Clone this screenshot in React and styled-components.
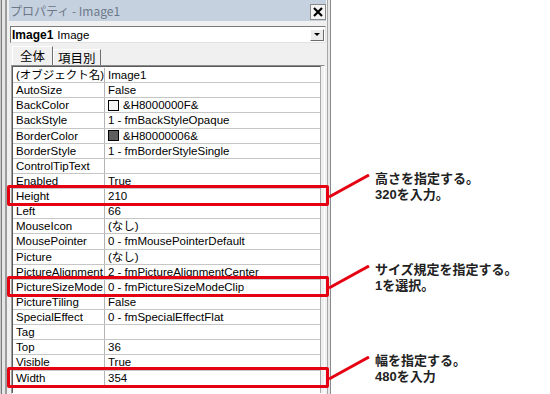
import React from 'react'
import styled, { createGlobalStyle } from 'styled-components'

const GlobalStyle = createGlobalStyle`
  body {
    margin: 0;
    background: #fff;
    font-family: "Liberation Sans", "Noto Sans CJK JP", sans-serif;
  }
`

const Page = styled.div`
  display: flex;
  width: 550px;
  height: 394px;
  overflow: hidden;
  background: #fff;
`
const Window = styled.section`
  display: flex;
  flex-direction: column;
  box-sizing: border-box;
  width: 331px;
  height: 394px;
  padding: 0 5px 0 9px;
  background: #f0f0f0;
  box-shadow: inset 1px 0 #c8c8c8, inset 2px 0 #7a7a7a, inset 5px 0 #e6e6e6,
    inset 7px 0 #9c9c9c, inset -1px 0 #8a8a8a, inset -3px 0 #e8e8e8,
    inset -4px 0 #a8a8a8;
`
const TitleBar = styled.header`
  display: flex;
  align-items: center;
  justify-content: space-between;
  height: 21px;
  padding-left: 1px;
  background: #c5d1df;
  color: #6d7888;
  font-family: "Noto Sans CJK JP", sans-serif;
  font-size: 12px;
`
const CloseButton = styled.div`
  display: flex;
  align-items: center;
  justify-content: center;
  box-sizing: border-box;
  width: 16px;
  height: 16px;
  margin-top: 2px;
  border: 1px solid #8a8a8a;
  background: #f4f4f4;
`
const Body = styled.div`
  display: flex;
  flex-direction: column;
  flex: 1;
  min-height: 0;
  padding: 5px 0 0 1px;
`
const ObjectSelect = styled.div`
  display: flex;
  align-items: center;
  box-sizing: border-box;
  height: 17px;
  padding-left: 1px;
  border: 1px solid;
  border-color: #7a7a7a #e2e2e2 #e2e2e2 #7a7a7a;
  background: #fff;
  font-size: 11.5px;
  color: #000;
  b {
    font-size: 12px;
    margin-right: 4px;
  }
`
const DropButton = styled.div`
  display: flex;
  align-items: center;
  justify-content: center;
  box-sizing: border-box;
  width: 14px;
  height: 12px;
  margin: 0 1px 0 auto;
  border: 1px solid;
  border-color: #fff #6a6a6a #6a6a6a #fff;
  background: #ececec;
  &::after {
    content: '';
    margin-top: 3px;
    border: 3px solid transparent;
    border-top: 3px solid #000;
  }
`
const TabStrip = styled.div`
  display: flex;
  align-items: flex-end;
  height: 19px;
  margin-top: 3px;
  padding-left: 2px;
`
const Tab = styled.div`
  box-sizing: border-box;
  height: ${p => (p.$active ? 19 : 16)}px;
  padding: 0 ${p => (p.$active ? 7 : 4)}px;
  border: 1px solid;
  border-bottom: none;
  border-color: #fff #6e6e6e transparent #fff;
  font-family: "Noto Sans CJK JP", sans-serif;
  font-size: 12.5px;
  line-height: ${p => (p.$active ? 17 : 15)}px;
  color: #000;
`
const Grid = styled.div`
  display: flex;
  flex-direction: column;
  flex: 1;
  margin: 0 1px 0 1px;
  padding-right: 3px;
  border: 1px solid;
  border-color: #8c8c8c #fff #fff #a0a0a0;
  background: #f0f0f0;
`
const Table = styled.div`
  flex: 1;
  padding-top: 1px;
  border-top: 1px solid #5a5a5a;
  border-left: 1px solid #5a5a5a;
  border-right: 1px solid #a8a8a8;
  background: #fff;
`
const Row = styled.div`
  position: relative;
  display: flex;
  box-sizing: border-box;
  height: 15.13px;
  border-bottom: 1px solid #c6c6c6;
  font-size: 11.5px;
  line-height: 14px;
  color: #000;
  ${p => p.$marked && `
    &::after {
      content: '';
      position: absolute;
      z-index: 2;
      left: -6px;
      right: -9px;
      top: -4px;
      bottom: -3px;
      border: 3px solid #e50012;
      border-radius: 2px;
      pointer-events: none;
    }
  `}
`
const NameCell = styled.div`
  box-sizing: border-box;
  width: 92px;
  padding-left: 3px;
  border-right: 1px solid #b4b4b4;
  overflow: hidden;
  white-space: nowrap;
`
const ValueCell = styled.div`
  display: flex;
  align-items: center;
  gap: 4px;
  flex: 1;
  padding-left: 3px;
  white-space: nowrap;
  overflow: hidden;
`
const Swatch = styled.span`
  box-sizing: border-box;
  width: 11px;
  height: 11px;
  border: 1px solid #000;
  background: ${p => p.$color};
`
const Callout = styled.div`
  position: absolute;
  z-index: 3;
  left: calc(100% + 8px);
  top: -18px;
  display: flex;
  align-items: flex-start;
  pointer-events: none;
`
const Note = styled.div`
  margin-left: 5px;
  font-family: "Liberation Sans", "Noto Sans CJK JP", sans-serif;
  font-size: 13px;
  font-weight: 700;
  color: #222;
  white-space: nowrap;
`
const NoteLine = styled.div`
  height: 16px;
  line-height: 16px;
`

const rows = [
  { name: '(オブジェクト名)', value: 'Image1' },
  { name: 'AutoSize', value: 'False' },
  { name: 'BackColor', value: '&H8000000F&', swatch: '#f4f4f4' },
  { name: 'BackStyle', value: '1 - fmBackStyleOpaque' },
  { name: 'BorderColor', value: '&H80000006&', swatch: '#5e5e5e' },
  { name: 'BorderStyle', value: '1 - fmBorderStyleSingle' },
  { name: 'ControlTipText', value: '' },
  { name: 'Enabled', value: 'True' },
  { name: 'Height', value: '210', note: ['高さを指定する。', '320を入力。'] },
  { name: 'Left', value: '66' },
  { name: 'MouseIcon', value: '(なし)' },
  { name: 'MousePointer', value: '0 - fmMousePointerDefault' },
  { name: 'Picture', value: '(なし)' },
  { name: 'PictureAlignment', value: '2 - fmPictureAlignmentCenter' },
  { name: 'PictureSizeMode', value: '0 - fmPictureSizeModeClip', note: ['サイズ規定を指定する。', '1を選択。'] },
  { name: 'PictureTiling', value: 'False' },
  { name: 'SpecialEffect', value: '0 - fmSpecialEffectFlat' },
  { name: 'Tag', value: '' },
  { name: 'Top', value: '36' },
  { name: 'Visible', value: 'True' },
  { name: 'Width', value: '354', note: ['幅を指定する。', '480を入力'] },
]

const Leader = () =>
  <svg width="42" height="25" style={{ marginTop: 3 }}>
    <line x1="1" y1="23" x2="41" y2="1" stroke="#e50012" strokeWidth="3" />
  </svg>

const App = () =>
  <Page>
    <GlobalStyle />
    <Window>
      <TitleBar>
        <span>プロパティ - Image1</span>
        <CloseButton>
          <svg width="10" height="10" viewBox="0 0 10 10">
            <path d="M1 1 L9 9 M9 1 L1 9" stroke="#000" strokeWidth="2.2" />
          </svg>
        </CloseButton>
      </TitleBar>
      <Body>
        <ObjectSelect>
          <b>Image1</b>Image
          <DropButton />
        </ObjectSelect>
        <TabStrip>
          <Tab $active>全体</Tab>
          <Tab>項目別</Tab>
        </TabStrip>
        <Grid>
          <Table>
            {rows.map(r =>
              <Row key={r.name} $marked={!!r.note}>
                <NameCell>{r.name}</NameCell>
                <ValueCell>
                  {r.swatch && <Swatch $color={r.swatch} />}
                  {r.value}
                </ValueCell>
                {r.note &&
                  <Callout>
                    <Leader />
                    <Note>
                      <NoteLine>{r.note[0]}</NoteLine>
                      <NoteLine>{r.note[1]}</NoteLine>
                    </Note>
                  </Callout>}
              </Row>
            )}
          </Table>
        </Grid>
      </Body>
    </Window>
  </Page>

export default App
